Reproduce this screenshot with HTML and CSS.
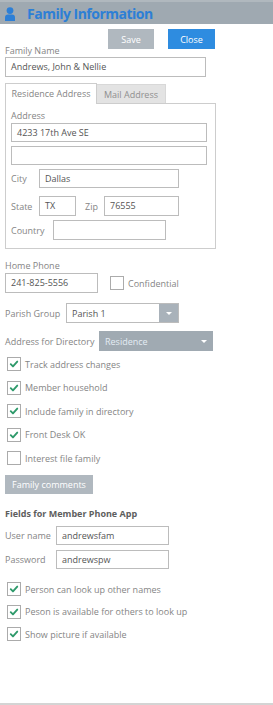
FILE: index.html
```html
<!DOCTYPE html>
<html>
<head>
<meta charset="utf-8">
<link rel="stylesheet" href="styles.css">
</head>
<body>
<div class="page">
  <div class="header">
    <svg class="user-icon" width="10" height="14" viewBox="0 0 10 14">
      <circle cx="5" cy="3.6" r="3.4" fill="#2d7fd6"/>
      <path d="M0 14 L0 10.5 Q0 7.6 3 7.6 L7 7.6 Q10 7.6 10 10.5 L10 14 Z" fill="#2d7fd6"/>
    </svg>
    <span class="title">Family Information</span>
  </div>

  <div class="toolbar">
    <button class="btn btn-gray btn-save">Save</button>
    <button class="btn btn-blue btn-close">Close</button>
  </div>

  <div class="label first-label">Family Name</div>
  <div class="input w-family">Andrews, John &amp; Nellie</div>

  <div class="tabs">
    <div class="tab tab-active">Residence Address</div>
    <div class="tab tab-inactive">Mail Address</div>
  </div>
  <div class="panel">
    <div class="label">Address</div>
    <div class="input w-addr">4233 17th Ave SE</div>
    <div class="input w-addr gap4"></div>
    <div class="row gap4">
      <span class="plabel lw28">City</span>
      <div class="input w-city">Dallas</div>
    </div>
    <div class="row gap8">
      <span class="plabel lw28">State</span>
      <div class="input w-state">TX</div>
      <span class="plabel zip-label">Zip</span>
      <div class="input w-zip">76555</div>
    </div>
    <div class="row gap4">
      <span class="plabel lw42">Country</span>
      <div class="input w-country"></div>
    </div>
  </div>

  <div class="label phone-label">Home Phone</div>
  <div class="row">
    <div class="input w-phone">241-825-5556</div>
    <span class="check conf-check"></span>
    <span class="ctext">Confidential</span>
  </div>

  <div class="row parish-row">
    <span class="plabel lw61">Parish Group</span>
    <div class="select w-parish">
      <span class="select-text">Parish 1</span>
      <span class="select-btn"><span class="caret"></span></span>
    </div>
  </div>

  <div class="row dir-row">
    <span class="plabel lw94">Address for Directory</span>
    <div class="select select-dark w-dir">
      <span class="select-text">Residence</span>
      <span class="caret"></span>
    </div>
  </div>

  <div class="checks checks-main">
    <div class="crow"><span class="check on"><svg viewBox="0 0 14 14"><path d="M3.2 7.2 L5.8 9.8 L10.8 4.2" /></svg></span><span class="ctext">Track address changes</span></div>
    <div class="crow"><span class="check on"><svg viewBox="0 0 14 14"><path d="M3.2 7.2 L5.8 9.8 L10.8 4.2" /></svg></span><span class="ctext">Member household</span></div>
    <div class="crow"><span class="check on"><svg viewBox="0 0 14 14"><path d="M3.2 7.2 L5.8 9.8 L10.8 4.2" /></svg></span><span class="ctext">Include family in directory</span></div>
    <div class="crow"><span class="check on"><svg viewBox="0 0 14 14"><path d="M3.2 7.2 L5.8 9.8 L10.8 4.2" /></svg></span><span class="ctext">Front Desk OK</span></div>
    <div class="crow"><span class="check"></span><span class="ctext">Interest file family</span></div>
  </div>

  <button class="btn btn-gray btn-comments">Family comments</button>

  <div class="section-title">Fields for Member Phone App</div>
  <div class="row">
    <span class="plabel lw51">User name</span>
    <div class="input w-app">andrewsfam</div>
  </div>
  <div class="row gap5">
    <span class="plabel lw51">Password</span>
    <div class="input w-app">andrewspw</div>
  </div>

  <div class="checks checks-app">
    <div class="crow"><span class="check on"><svg viewBox="0 0 14 14"><path d="M3.2 7.2 L5.8 9.8 L10.8 4.2" /></svg></span><span class="ctext">Person can look up other names</span></div>
    <div class="crow"><span class="check on"><svg viewBox="0 0 14 14"><path d="M3.2 7.2 L5.8 9.8 L10.8 4.2" /></svg></span><span class="ctext">Peson is available for others to look up</span></div>
    <div class="crow"><span class="check on"><svg viewBox="0 0 14 14"><path d="M3.2 7.2 L5.8 9.8 L10.8 4.2" /></svg></span><span class="ctext">Show picture if available</span></div>
  </div>
</div>
</body>
</html>
```

FILE: styles.css
```css
* { box-sizing: border-box; }
html, body { margin: 0; padding: 0; background: #fff; }
body {
  width: 273px;
  height: 705px;
  overflow: hidden;
  font-family: "Open Sans", "Liberation Sans", sans-serif;
  font-size: 9px;
  color: #858585;
}
.page {
  height: 705px;
  border-bottom: 2px solid #d4d4d4;
}
.header {
  height: 24px;
  background: #9fa9b1;
  border-top: 2px solid #b0b8be;
  display: flex;
  align-items: center;
  padding-left: 5px;
}
.user-icon { display: block; margin-right: 12px; margin-top: 1px; }
.title {
  font-family: "Open Sans", sans-serif;
  font-weight: 700;
  font-size: 14px;
  color: #2d7fd6;
  letter-spacing: -0.5px;
}
.toolbar {
  display: flex;
  margin-top: 5px;
  padding-left: 108px;
  margin-bottom: -4px;
}
.btn {
  border: none;
  font-family: "Open Sans", sans-serif;
  font-size: 9px;
  color: #fff;
  height: 20px;
  padding: 0;
  display: block;
}
.btn-gray { background: #b0b8bf; }
.btn-blue { background: #2e8ce0; }
.btn-save { width: 46px; }
.btn-close { width: 47px; margin-left: 14px; }

.label { line-height: 12px; height: 12px; }
.first-label { margin-left: 5px; }
.input {
  height: 20px;
  border: 1px solid #bcbcbc;
  background: #fff;
  color: #555;
  line-height: 18px;
  padding-left: 5px;
  white-space: nowrap;
  overflow: hidden;
}
.w-family { width: 201px; margin-left: 5px; }

.tabs {
  display: flex;
  align-items: flex-end;
  margin-left: 5px;
  margin-top: 6px;
  height: 20px;
}
.tab {
  line-height: 19px;
  text-align: center;
}
.tab-active {
  width: 92px;
  height: 21px;
  margin-bottom: -1px;
  background: #fff;
  border: 1px solid #cdcdcd;
  border-bottom: none;
  position: relative;
  z-index: 1;
}
.tab-inactive {
  width: 69px;
  height: 19px;
  background: #e3e3e3;
  border-top: 1px solid #d8d8d8;
  border-right: 1px solid #d8d8d8;
  color: #8f8f8f;
}
.panel {
  width: 211px;
  margin-left: 5px;
  border: 1px solid #cdcdcd;
  padding: 6px 0 8px 5px;
}
.panel .label { margin-left: 0; margin-bottom: 1px; }
.w-addr { width: 196px; height: 19px; }
.row { display: flex; align-items: center; }
.gap4 { margin-top: 4px; }
.gap5 { margin-top: 5px; }
.gap8 { margin-top: 8px; }
.plabel { display: block; white-space: nowrap; }
.lw28 { width: 28px; }
.lw42 { width: 42px; }
.lw51 { width: 51px; }
.lw61 { width: 61px; }
.lw94 { width: 94px; }
.zip-label { margin-left: 9px; width: 19px; }
.w-city { width: 140px; height: 19px; }
.w-state { width: 37px; height: 20px; }
.w-zip { width: 75px; height: 20px; }
.w-country { width: 113px; height: 20px; }

.phone-label { margin-left: 5px; margin-top: 11px; margin-bottom: 1px; }
.w-phone { width: 93px; margin-left: 5px; }
.conf-check { margin-left: 12px; }

.check {
  width: 14px;
  height: 14px;
  border: 1px solid #ababab;
  background: #fff;
  display: block;
  flex: none;
}
.check svg { display: block; width: 12px; height: 12px; }
.check svg path {
  fill: none;
  stroke: #2e9a6b;
  stroke-width: 2.2;
  stroke-linecap: round;
  stroke-linejoin: round;
}
.ctext { margin-left: 4px; white-space: nowrap; }

.parish-row { margin-top: 10px; padding-left: 5px; }
.select {
  height: 20px;
  border: 1px solid #bcbcbc;
  display: flex;
  align-items: center;
  background: #fff;
  color: #555;
}
.w-parish { width: 113px; }
.select-text { flex: 1; padding-left: 5px; }
.select-btn {
  width: 19px;
  height: 18px;
  background: #a9b2ba;
  display: flex;
  align-items: center;
  justify-content: center;
}
.caret {
  width: 0; height: 0;
  border-left: 3px solid transparent;
  border-right: 3px solid transparent;
  border-top: 3px solid #fff;
  display: block;
}
.dir-row { margin-top: 8px; padding-left: 5px; }
.select-dark {
  background: #a0aab2;
  border-color: #a0aab2;
  color: #e4ecf4;
  padding-right: 5px;
}
.w-dir { width: 114px; }

.checks { padding-left: 7px; }
.checks-main { margin-top: 6px; }
.crow { display: flex; align-items: center; height: 14px; margin-bottom: 9.5px; }
.crow:last-child { margin-bottom: 0; }

.btn-comments { width: 88px; height: 19px; margin-left: 5px; margin-top: 10px; }

.section-title {
  margin-left: 5px;
  margin-top: 14px;
  font-weight: 700;
  color: #5e5e5e;
  line-height: 12px;
}
.section-title + .row { margin-top: 6px; padding-left: 5px; }
.row.gap5 { padding-left: 5px; }
.w-app { width: 113px; height: 19px; }
.checks-app { margin-top: 13px; }
.checks-app .crow { margin-bottom: 8.5px; }
.checks-app .crow:last-child { margin-bottom: 0; }
```
